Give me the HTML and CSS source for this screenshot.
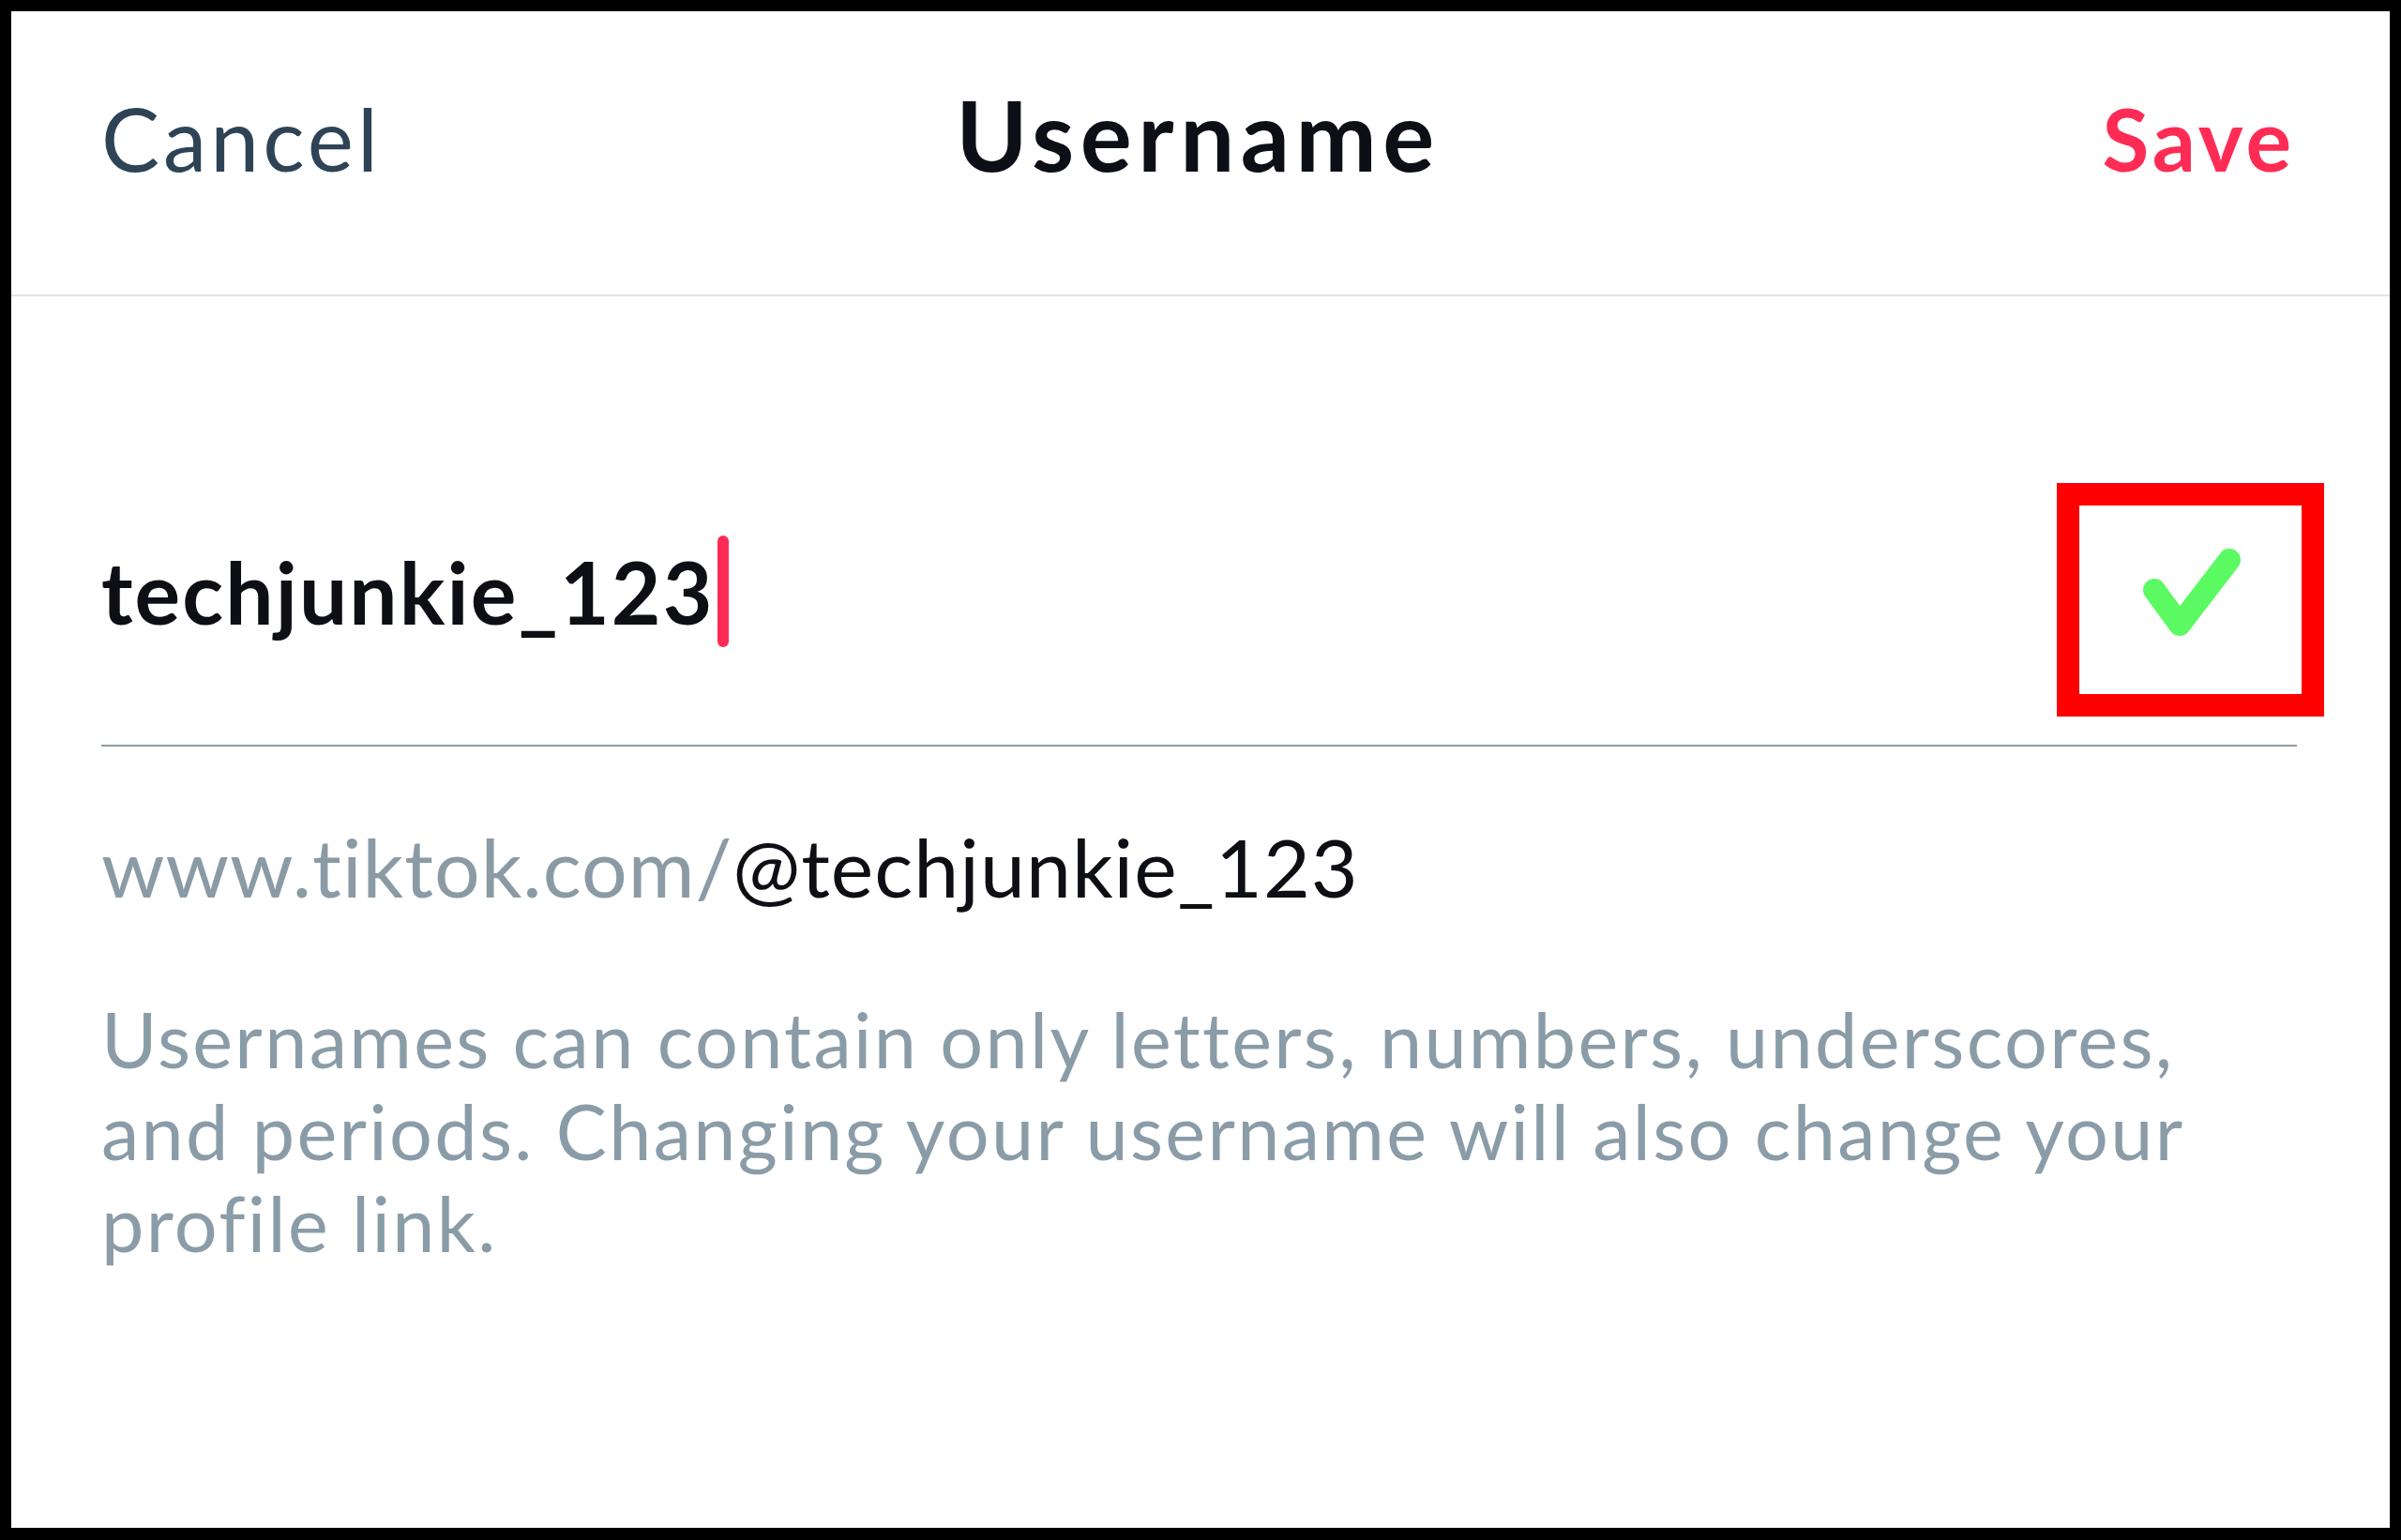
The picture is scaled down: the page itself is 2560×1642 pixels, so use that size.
FILE: index.html
```html
<!DOCTYPE html>
<html lang="en">
<head>
  <meta charset="UTF-8">
  <meta name="viewport" content="width=device-width, initial-scale=1.0">
  <title>Username</title>
  <link rel="stylesheet" href="styles.css">
</head>
<body>
  <div class="frame">
    <header class="top-bar">
      <span class="cancel">Cancel</span>
      <h1 class="title">Username</h1>
      <span class="save">Save</span>
    </header>

    <main class="content">
      <div class="field-row">
        <div class="field-value">
          <span class="username">techjunkie_123</span>
          <span class="cursor"></span>
        </div>
        <div class="check-wrap">
          <svg class="check" width="120" height="100" viewBox="0 0 120 100">
            <polyline points="20,48 47,85 100,16" fill="none" stroke="#5cfa62" stroke-width="24" stroke-linecap="round" stroke-linejoin="round"/>
          </svg>
          <span class="highlight"></span>
        </div>
      </div>

      <p class="profile-url"><span class="url-base">www.tiktok.com/</span>@techjunkie_123</p>

      <p class="hint">Usernames can contain only letters, numbers, underscores, and periods. Changing your username will also change your profile link.</p>
    </main>
  </div>
</body>
</html>
```

FILE: styles.css
```css
html, body {
  margin: 0;
  padding: 0;
  background: #ffffff;
}

body {
  font-family: 'Lato', 'Liberation Sans', sans-serif;
}

.frame {
  box-sizing: border-box;
  width: 2560px;
  height: 1642px;
  border: 12px solid #000;
  border-bottom-width: 13px;
  background: #fff;
}

/* Barra superior */
.top-bar {
  box-sizing: border-box;
  height: 304px;
  padding: 69px 101px 0 96px;
  display: grid;
  grid-template-columns: 1fr auto 1fr;
  align-items: baseline;
  border-bottom: 2px solid #dfe5e8;
}

.cancel {
  font-size: 93px;
  letter-spacing: 4px;
  color: #2e4356;
}

.title {
  margin: 0;
  font-size: 103px;
  font-weight: 700;
  letter-spacing: 6.5px;
  color: #0c0f15;
}

.save {
  justify-self: end;
  font-size: 91px;
  font-weight: 700;
  letter-spacing: 4px;
  color: #fe2c55;
}

/* Contenido */
.content {
  padding: 0 99px 0 96px;
}

.field-row {
  display: flex;
  align-items: center;
  justify-content: space-between;
  padding: 255px 0 104px;
  border-bottom: 2px solid #8f9da5;
}

.field-value {
  display: flex;
  align-items: center;
}

.username {
  font-size: 91px;
  font-weight: 700;
  letter-spacing: 2.1px;
  color: #0d0f14;
}

.cursor {
  width: 12px;
  height: 119px;
  margin-left: 3px;
  border-radius: 6px;
  background: #fe2c55;
}

.check-wrap {
  position: relative;
  margin-right: 52px;
  height: 100px;
}

.check {
  display: block;
}

.highlight {
  position: absolute;
  left: -84px;
  top: -66px;
  width: 285px;
  height: 249px;
  box-sizing: border-box;
  border: 24px solid #ff0000;
}

.profile-url {
  margin: 76px 0 0;
  font-size: 86px;
  letter-spacing: 1px;
  color: #0d0f14;
}

.url-base {
  color: #8a9ba5;
}

.hint {
  margin: 84px 0 0;
  font-size: 81px;
  line-height: 98px;
  letter-spacing: 2.3px;
  color: #8a9ca7;
}
```
